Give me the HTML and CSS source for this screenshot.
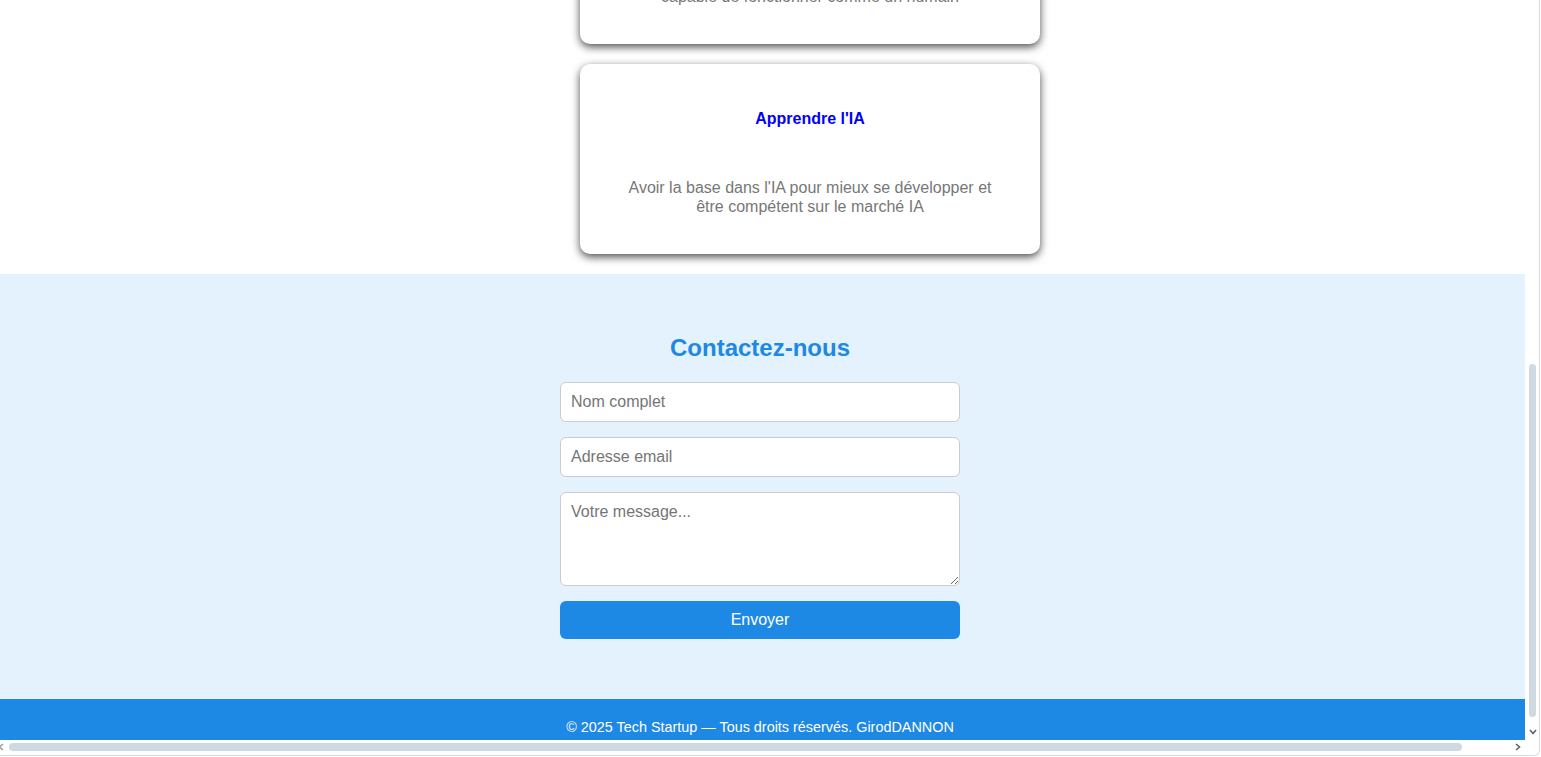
FILE: index.html
```html
<!DOCTYPE html>
<html lang="fr">
<head>
<meta charset="utf-8">
<title>Tech Startup</title>
<link rel="stylesheet" href="styles.css">
</head>
<body>
<div class="window">
  <div class="viewport">
    <section class="services">
      <div class="card">
        <h3 class="card-title">Intelligence Artificielle</h3>
        <p class="card-text">Une IA générale et polyvalente<br>capable de fonctionner comme un humain</p>
      </div>
      <div class="card">
        <h3 class="card-title">Apprendre l'IA</h3>
        <p class="card-text">Avoir la base dans l'IA pour mieux se développer et être compétent sur le marché IA</p>
      </div>
    </section>
    <section class="contact">
      <h2 class="contact-title">Contactez-nous</h2>
      <form class="contact-form">
        <input class="field" type="text" placeholder="Nom complet">
        <input class="field" type="email" placeholder="Adresse email">
        <textarea class="field area" placeholder="Votre message..."></textarea>
        <button class="send" type="button">Envoyer</button>
      </form>
    </section>
    <footer class="footer">
      <p class="footer-text">© 2025 Tech Startup — Tous droits réservés. GirodDANNON</p>
    </footer>
  </div>
  <div class="vbar">
    <div class="vthumb"></div>
    <svg class="chev-down" width="8" height="6" viewBox="0 0 8 6"><polyline points="1,1 4,4.5 7,1" fill="none" stroke="#5f6368" stroke-width="1.6"/></svg>
  </div>
  <div class="hbar">
    <svg class="chev-left" width="4" height="8" viewBox="2 0 4 8"><polyline points="5,1 1.5,4 5,7" fill="none" stroke="#9aa0a6" stroke-width="1.6"/></svg>
    <div class="hthumb"></div>
    <svg class="chev-right" width="6" height="8" viewBox="0 0 6 8"><polyline points="1,1 4.5,4 1,7" fill="none" stroke="#5f6368" stroke-width="1.6"/></svg>
  </div>
  <div class="corner"></div>
</div>
</body>
</html>
```
FILE: styles.css
```css
* { box-sizing: border-box; }

html, body {
  margin: 0;
  padding: 0;
  background: #ffffff;
  overflow: hidden;
  font-family: "Liberation Sans", Arial, sans-serif;
}

.window {
  width: 1540px;
  height: 756px;
  display: grid;
  grid-template-columns: 1525px 1fr;
  grid-template-rows: 740px 1fr;
  border-right: 1px solid #cfdbe8;
  border-bottom: 1px solid #cfdbe8;
  border-bottom-right-radius: 6px;
  overflow: hidden;
}

.viewport {
  overflow: hidden;
  display: flex;
  flex-direction: column;
}

/* services */
.services {
  margin-top: -146px;
  padding: 0 0 20px 95px;
  display: flex;
  flex-direction: column;
  align-items: center;
  gap: 20px;
  background: #ffffff;
}

.card {
  width: 460px;
  height: 190px;
  background: #ffffff;
  border-radius: 10px;
  box-shadow: 0 3px 9px rgba(0, 0, 0, 0.7);
  padding: 45px 40px 0;
  text-align: center;
  flex-shrink: 0;
}

.card-title {
  margin: 0;
  font-size: 16px;
  line-height: 20px;
  font-weight: bold;
  color: #0000ff;
}

.card-text {
  margin: 49px 0 0;
  font-size: 16px;
  line-height: 19px;
  color: #777777;
}

/* contact */
.contact {
  background: #e3f2fd;
  padding: 59px 5px 60px 0;
  display: flex;
  flex-direction: column;
  align-items: center;
  flex-shrink: 0;
}

.contact-title {
  margin: 0 0 20px;
  font-size: 24px;
  line-height: 29px;
  font-weight: bold;
  color: #1e88e5;
}

.contact-form {
  width: 400px;
  display: flex;
  flex-direction: column;
  gap: 15px;
}

.field {
  display: block;
  width: 100%;
  height: 40px;
  padding: 10px;
  border: 1px solid #cccccc;
  border-radius: 6px;
  background: #ffffff;
  font-family: "Liberation Sans", Arial, sans-serif;
  font-size: 16px;
  line-height: 18px;
  color: #333333;
  margin: 0;
}

.field::placeholder { color: #757575; }

.area {
  height: 94px;
  resize: vertical;
}

.send {
  display: block;
  width: 100%;
  height: 38px;
  margin: 0;
  border: none;
  border-radius: 6px;
  background: #1e88e5;
  color: #ffffff;
  font-family: "Liberation Sans", Arial, sans-serif;
  font-size: 16px;
  line-height: 18px;
  cursor: pointer;
}

/* footer */
.footer {
  background: #1e88e5;
  padding: 20px 5px 20px 0;
  flex-shrink: 0;
}

.footer-text {
  margin: 0;
  text-align: center;
  font-size: 14.4px;
  line-height: 16px;
  color: #ffffff;
}

/* scrollbars */
.vbar {
  display: flex;
  flex-direction: column;
  align-items: flex-start;
  padding-left: 4px;
  background: #ffffff;
}

.vthumb {
  margin-top: 364px;
  width: 7px;
  height: 353px;
  border-radius: 4px;
  background: #cfd9e2;
}

.chev-down {
  margin-top: 12px;
  display: block;
}

.hbar {
  display: flex;
  align-items: flex-start;
  background: #ffffff;
}

.chev-left {
  display: block;
  margin-top: 3px;
}

.hthumb {
  margin: 3px 0 0 5px;
  width: 1453px;
  height: 8px;
  border-radius: 4px;
  background: #cfd9e2;
}

.chev-right {
  display: block;
  margin: 3px 0 0 53px;
}

.corner { background: #ffffff; }
```
